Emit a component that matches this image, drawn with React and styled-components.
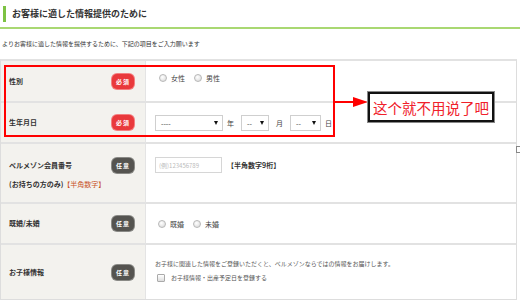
import React from 'react';
import styled, { createGlobalStyle } from 'styled-components';

const Global = createGlobalStyle`
  html, body {
    margin: 0;
    padding: 0;
    background: #fff;
  }
  body {
    font-family: "Noto Sans CJK JP", "Noto Sans", sans-serif;
    color: #333;
  }
`

const Page = styled.div`
  position: relative;
  width: 520px;
  height: 300px;
  overflow: hidden;
`
const Heading = styled.div`
  display: flex;
  align-items: center;
  height: 27px;
  padding: 0 0 0 3px;
  border-bottom: 2px solid #a9d872;
`
const HeadBar = styled.div`
  width: 3px;
  height: 16px;
  background: #7dc243;
  margin-right: 6px;
`
const HeadText = styled.h2`
  margin: 0;
  font-size: 9px;
  font-weight: bold;
  color: #333;
`
const Lead = styled.p`
  margin: 0;
  padding: 11px 0 0 2px;
  height: 19px;
  font-size: 6px;
  line-height: 8px;
  color: #333;
`
const Table = styled.div`
  width: 515px;
  border: 1px solid #ddd;
  border-top: 2px solid #e2e2e2;
  display: grid;
  grid-template-columns: 145px 1fr;
`
const Label = styled.div`
  height: ${p => p.h}px;
  background: #f3f2ee;
  border-right: 1px solid #e4e4e4;
  border-bottom: ${p => (p.last ? 'none' : '2px solid #e2e2e2')};
  box-sizing: border-box;
  display: flex;
  align-items: ${p => (p.top ? 'flex-start' : 'center')};
  justify-content: space-between;
  padding: ${p => (p.top ? '12px 11px 0 8px' : '0 11px 0 8px')};
`
const LabelText = styled.div`
  font-size: 7px;
  line-height: 19px;
  font-weight: bold;
  color: #333;
`
const Note = styled.span`
  color: #c8501f;
  font-weight: normal;
`
const Badge = styled.span`
  display: inline-flex;
  align-items: center;
  justify-content: center;
  width: 22px;
  height: 15px;
  border-radius: 5px;
  font-size: 6px;
  font-weight: bold;
  color: #fff;
  letter-spacing: 1px;
  margin-top: ${p => (p.top ? '2px' : '0')};
  background: ${p => (p.required ? '#e9393c' : '#555450')};
  box-shadow: 0 0 0 1px ${p => (p.required ? '#f47f80' : '#8a8a86')};
`
const Cell = styled.div`
  height: ${p => p.h}px;
  border-bottom: ${p => (p.last ? 'none' : '2px solid #e2e2e2')};
  box-sizing: border-box;
  padding: ${p => p.pad || '0 0 0 9px'};
  display: flex;
  flex-direction: ${p => (p.col ? 'column' : 'row')};
  align-items: ${p => (p.col || p.top ? 'flex-start' : 'center')};
  gap: ${p => p.gap || '0'};
  font-size: 7px;
  color: #444;
`
const Choice = styled.label`
  display: inline-flex;
  align-items: center;
  margin: 0 9px 0 0;
  font-size: 7px;
  color: #444;
`
const Radio = styled.span`
  width: 6px;
  height: 6px;
  border-radius: 50%;
  border: 1px solid #b8b8b8;
  background: radial-gradient(circle at 40% 35%, #fff, #d6d6d6);
  margin-right: 4px;
`
const Check = styled.span`
  width: 6px;
  height: 6px;
  border: 1px solid #aaa;
  border-radius: 1px;
  background: linear-gradient(#fff, #ddd);
  margin-right: 6px;
`
const Select = styled.div`
  width: ${p => p.w}px;
  height: 16px;
  box-sizing: border-box;
  border: 1px solid #cfcfcf;
  background: #fff;
  display: flex;
  align-items: center;
  justify-content: space-between;
  padding: 0 4px 0 5px;
  font-size: 7px;
  color: #333;
`
const Caret = styled.span`
  width: 0;
  height: 0;
  border-left: 2px solid transparent;
  border-right: 2px solid transparent;
  border-top: 4px solid #111;
`
const Unit = styled.span`
  font-size: 7px;
  color: #444;
  margin: 0 ${p => p.r ?? 7}px 0 ${p => p.l ?? 4}px;
`
const Input = styled.div`
  width: 67px;
  height: 16px;
  box-sizing: border-box;
  border: 1px solid #d6d6d6;
  font-size: 6px;
  color: #bbb;
  display: flex;
  align-items: center;
  padding-left: 3px;
`
const Hint = styled.span`
  font-size: 7px;
  line-height: 16px;
  font-weight: bold;
  color: #333;
  margin-left: 5px;
`
const Small = styled.div`
  font-size: 6px;
  line-height: 8px;
  color: #555;
`
const Row = styled.div`
  display: flex;
  align-items: center;
  padding-left: 2px;
`
const RedFrame = styled.div`
  position: absolute;
  left: 4px;
  top: 65px;
  width: 331px;
  height: 72px;
  box-sizing: border-box;
  border: 2px solid #f00;
`
const Arrow = styled.svg`
  position: absolute;
  left: 335px;
  top: 96px;
`
const Callout = styled.div`
  position: absolute;
  left: 368px;
  top: 92px;
  width: 126px;
  height: 30px;
  box-sizing: border-box;
  border: 2px solid #111;
  outline: 1px solid #888;
  background: #fff;
  display: flex;
  align-items: center;
  justify-content: center;
  font-family: "Noto Sans CJK SC", sans-serif;
  font-size: 14.5px;
  color: #f0202a;
`
const Corner = styled.div`
  position: absolute;
  left: 516px;
  top: 146px;
  width: 4px;
  height: 5px;
  border: 1px solid #888;
  border-right: none;
`

export default function App() {
  return (
    <Page>
      <Global />
      <Heading>
        <HeadBar />
        <HeadText>お客様に適した情報提供のために</HeadText>
      </Heading>
      <Lead>よりお客様に適した情報を提供するために、下記の項目をご入力願います</Lead>
      <Table>
        <Label h={42}>
          <LabelText>性別</LabelText>
          <Badge required>必須</Badge>
        </Label>
        <Cell h={42} pad="0 0 6px 13px">
          <Choice><Radio />女性</Choice>
          <Choice><Radio />男性</Choice>
        </Cell>

        <Label h={41}>
          <LabelText>生年月日</LabelText>
          <Badge required>必須</Badge>
        </Label>
        <Cell h={41} pad="0 0 0 9px">
          <Select w={68}>----<Caret /></Select>
          <Unit>年</Unit>
          <Select w={28}>--<Caret /></Select>
          <Unit l={7}>月</Unit>
          <Select w={31}>--<Caret /></Select>
          <Unit r={0}>日</Unit>
        </Cell>

        <Label h={60} top>
          <LabelText>
            ベルメゾン会員番号<br />
            (お持ちの方のみ)<Note>【半角数字】</Note>
          </LabelText>
          <Badge top>任意</Badge>
        </Label>
        <Cell h={60} top pad="13px 0 0 9px">
          <Input>(例)123456789</Input>
          <Hint>【半角数字9桁】</Hint>
        </Cell>

        <Label h={41}>
          <LabelText>既婚/未婚</LabelText>
          <Badge>任意</Badge>
        </Label>
        <Cell h={41} pad="0 0 0 12px">
          <Choice><Radio />既婚</Choice>
          <Choice><Radio />未婚</Choice>
        </Cell>

        <Label h={54} last>
          <LabelText>お子様情報</LabelText>
          <Badge>任意</Badge>
        </Label>
        <Cell h={54} last col gap="6px" pad="15px 0 0 9px">
          <Small>お子様に関連した情報をご登録いただくと、ベルメゾンならではの情報をお届けします。</Small>
          <Row>
            <Check />
            <Small>お子様情報・出産予定日を登録する</Small>
          </Row>
        </Cell>
      </Table>

      <RedFrame />
      <Arrow width="34" height="12" viewBox="0 0 34 12">
        <line x1="0" y1="6" x2="20" y2="6" stroke="#f00" strokeWidth="2" />
        <polygon points="18,1 33,6 18,11" fill="#f00" />
      </Arrow>
      <Callout>这个就不用说了吧</Callout>
      <Corner />
    </Page>
  );
}
